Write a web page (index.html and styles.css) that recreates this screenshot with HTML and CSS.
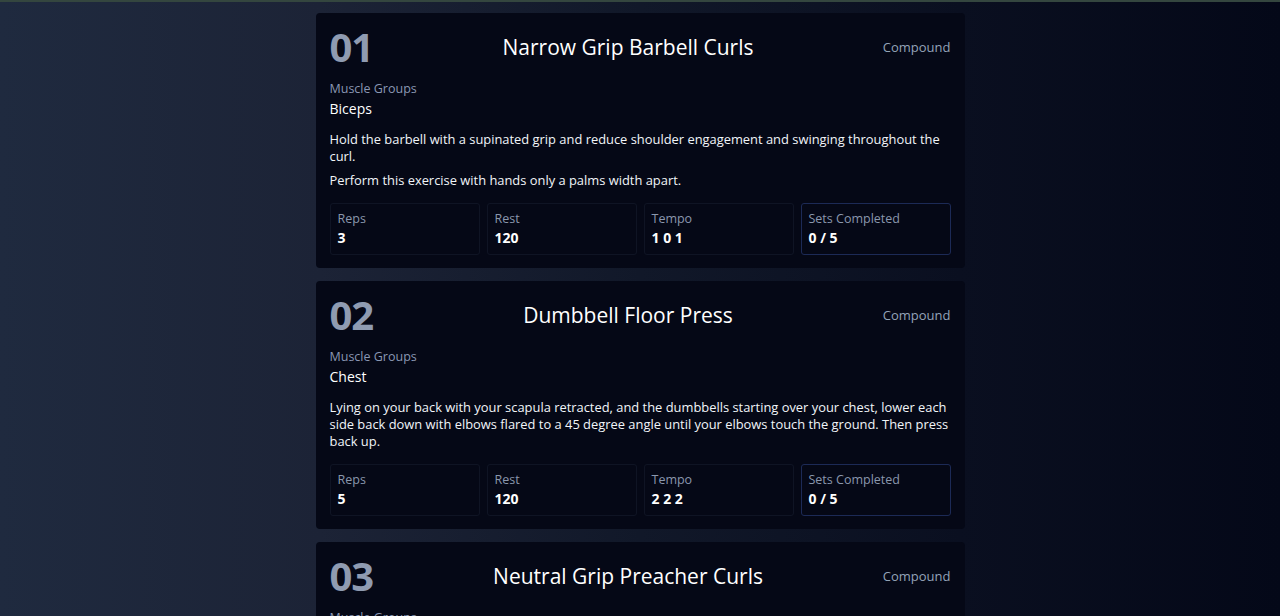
FILE: index.html
```html
<!DOCTYPE html>
<html lang="en">
<head>
<meta charset="utf-8">
<title>Workout</title>
<link rel="stylesheet" href="styles.css">
</head>
<body>
<div class="topline"></div>
<main class="list">
  <section class="card">
    <header class="card-head">
      <span class="num">01</span>
      <h2 class="title">Narrow Grip Barbell Curls</h2>
      <span class="type">Compound</span>
    </header>
    <div class="muscle-label">Muscle Groups</div>
    <div class="muscle">Biceps</div>
    <div class="desc">
      <p>Hold the barbell with a supinated grip and reduce shoulder engagement and swinging throughout the curl.</p>
      <p>Perform this exercise with hands only a palms width apart.</p>
    </div>
    <div class="stats">
      <div class="stat"><span class="stat-label">Reps</span><span class="stat-value">3</span></div>
      <div class="stat"><span class="stat-label">Rest</span><span class="stat-value">120</span></div>
      <div class="stat"><span class="stat-label">Tempo</span><span class="stat-value">1 0 1</span></div>
      <div class="stat stat-sets"><span class="stat-label">Sets Completed</span><span class="stat-value">0 / 5</span></div>
    </div>
  </section>
  <section class="card">
    <header class="card-head">
      <span class="num">02</span>
      <h2 class="title">Dumbbell Floor Press</h2>
      <span class="type">Compound</span>
    </header>
    <div class="muscle-label">Muscle Groups</div>
    <div class="muscle">Chest</div>
    <div class="desc">
      <p>Lying on your back with your scapula retracted, and the dumbbells starting over your chest, lower each side back down with elbows flared to a 45 degree angle until your elbows touch the ground. Then press back up.</p>
    </div>
    <div class="stats">
      <div class="stat"><span class="stat-label">Reps</span><span class="stat-value">5</span></div>
      <div class="stat"><span class="stat-label">Rest</span><span class="stat-value">120</span></div>
      <div class="stat"><span class="stat-label">Tempo</span><span class="stat-value">2 2 2</span></div>
      <div class="stat stat-sets"><span class="stat-label">Sets Completed</span><span class="stat-value">0 / 5</span></div>
    </div>
  </section>
  <section class="card">
    <header class="card-head">
      <span class="num">03</span>
      <h2 class="title">Neutral Grip Preacher Curls</h2>
      <span class="type">Compound</span>
    </header>
    <div class="muscle-label">Muscle Groups</div>
    <div class="muscle">Biceps</div>
  </section>
</main>
</body>
</html>
```

FILE: styles.css
```css
* { box-sizing: border-box; }

html, body {
  margin: 0;
  padding: 0;
  height: 100%;
  overflow: hidden;
}

body {
  font-family: "Open Sans", "Noto Sans", sans-serif;
  color: #f8fafc;
  background: linear-gradient(90deg, #1f2a3f 0%, #1c2336 25%, #111829 50%, #0a0f20 75%, #040818 100%);
}

.topline {
  height: 2px;
  background: #34463f;
}

.list {
  width: 649px;
  margin: 11px auto 0;
  display: flex;
  flex-direction: column;
  gap: 13px;
}

.card {
  background: #050816;
  border-radius: 4px;
  padding: 14px 14px 13px;
}

.card-head {
  display: flex;
  align-items: center;
  justify-content: space-between;
  height: 40px;
}

.num {
  font-size: 40px;
  font-weight: 700;
  color: #8f9bb1;
  line-height: 40px;
  letter-spacing: -1px;
}

.title {
  margin: 0;
  font-size: 21px;
  font-weight: 400;
  color: #ffffff;
}

.type {
  font-size: 13px;
  color: #94a3b8;
}

.muscle-label {
  margin-top: 13px;
  font-size: 12.5px;
  line-height: 18px;
  color: #8a97b3;
}

.muscle {
  margin-top: 1px;
  font-size: 14px;
  line-height: 20px;
  color: #ffffff;
}

.desc {
  margin-top: 12px;
  font-size: 12.9px;
  line-height: 17px;
  color: #f1f5f9;
}

.desc p {
  margin: 0;
}

.desc p + p {
  margin-top: 7px;
}

.stats {
  margin-top: 14px;
  display: grid;
  grid-template-columns: repeat(4, 1fr);
  gap: 7px;
}

.stat {
  display: flex;
  flex-direction: column;
  padding: 6px 7px;
  border: 1px solid #0f1424;
  border-radius: 3px;
}

.stat-sets {
  border-color: #1c2a56;
}

.stat-label {
  font-size: 12.5px;
  line-height: 18px;
  color: #8a97ad;
}

.stat-value {
  font-size: 14px;
  line-height: 20px;
  font-weight: 700;
  color: #ffffff;
}
```
